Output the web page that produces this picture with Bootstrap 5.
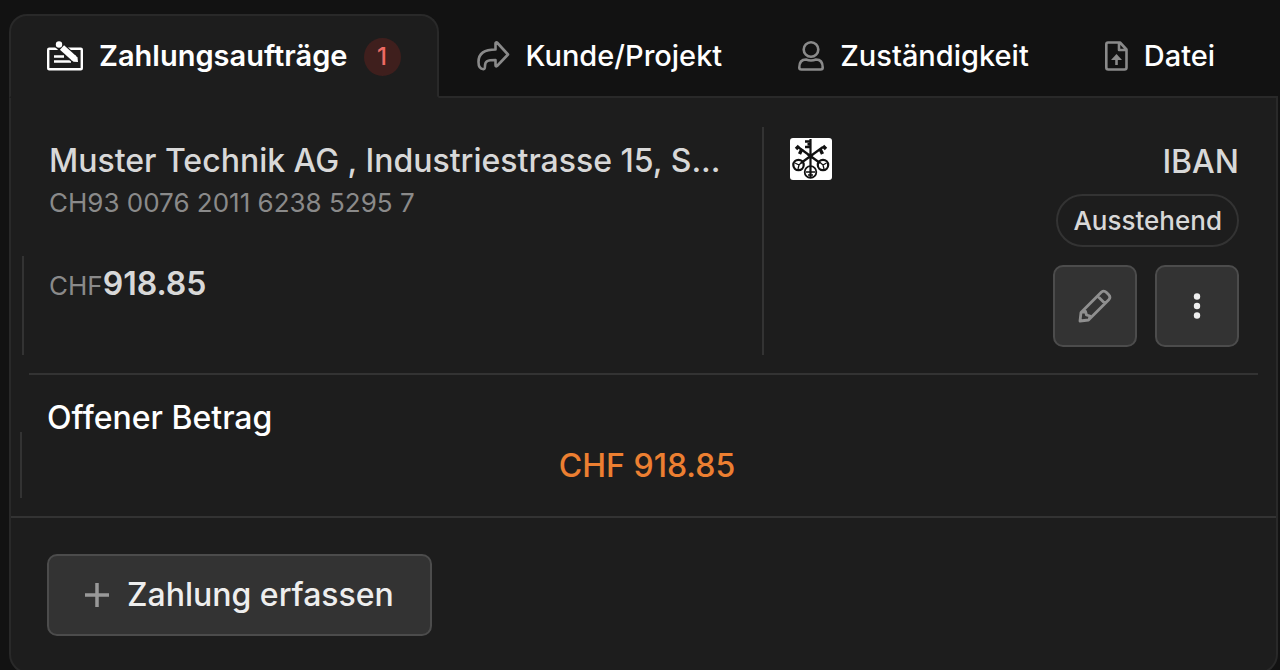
<!DOCTYPE html>
<html lang="de" data-bs-theme="dark">
<head>
<meta charset="utf-8">
<meta name="viewport" content="width=device-width, initial-scale=1">
<title>Zahlungsaufträge</title>
<link href="https://cdn.jsdelivr.net/npm/bootstrap@5.3.0/dist/css/bootstrap.min.css" rel="stylesheet">
<style>
  :root { --surface: #1d1d1d; --edge: #292929; --rule: #333; --muted: #8a8a8a; --soft: #d8d8d8; }
  body { background: #121212; font-family: Inter, "Liberation Sans", sans-serif; font-size: 32px; line-height: 40px; color: #fff; }
  .page-area { height: 100vh; overflow: hidden; padding: 14px 2px 0 9px; }
  .pay-tabs { border: 0; }
  .pay-tabs .nav-item { margin-bottom: -2px; position: relative; }
  .pay-tabs .nav-link { display: flex; align-items: center; gap: 16px; height: 84px; padding: 0 36px; border: 2px solid transparent; border-radius: 18px 18px 0 0; margin: 0; font-size: 29px; font-weight: 500; color: #fff; }
  .pay-tabs .nav-link.active { background: var(--surface); border-color: var(--edge); border-bottom-color: var(--surface); color: #fff; font-weight: 600; }
  .pay-tabs svg { flex: none; }
  .count { width: 37px; height: 38px; margin-top: 2px; border-radius: 50%; background: #3f1f1d; color: #ee6a63; font-size: 24px; font-weight: 500; }
  .panel { background: var(--surface); border: 2px solid var(--edge); border-radius: 0 0 20px 20px; }
  .payment { padding: 29px 0 18px; }
  .payee { border-right: 2px solid var(--rule); width: 753px; }
  .payee-text { padding: 14px 36px 0 38px; height: 129px; }
  .soft { color: var(--soft); }
  .payee-name, .method { font-weight: 500; }
  .small-text { font-size: 26px; line-height: 44px; }
  .muted { color: var(--muted); }
  .amount { margin-left: 11px; padding-left: 25px; border-left: 2px solid var(--rule); height: 99px; padding-top: 8px; }
  .amount strong { font-weight: 600; }
  .details { padding: 11px 37px 0 26px; }
  .pill { border: 2px solid var(--rule); border-radius: 27px; padding: 5px 15px; height: 53px; font-size: 26px; line-height: 40px; font-weight: 500; margin: 12px 0 18px; }
  .tool { --bs-btn-bg: #333; --bs-btn-border-color: #4c4c4c; --bs-btn-color: #eee; --bs-btn-hover-bg: #3c3c3c; --bs-btn-hover-border-color: #5a5a5a; --bs-btn-hover-color: #fff; --bs-btn-border-width: 2px; --bs-btn-border-radius: 10px; height: 82px; padding: 0; }
  .tool-square { width: 84px; }
  .tools { gap: 18px; }
  .divider { margin: 0 18px; border-top: 2px solid var(--rule); opacity: 1; }
  .open-title { font-size: 32px; line-height: 40px; font-weight: 500; margin: 0; padding: 23px 0 0 36px; height: 57px; }
  .open-amount { margin-left: 9px; padding-right: 4px; border-left: 2px solid var(--rule); height: 66px; padding-top: 14px; color: #ec7f31; font-weight: 500; margin-bottom: 18px; }
  .actions { border-top: 2px solid var(--rule); padding: 36px; }
  .add-btn { display: inline-flex; align-items: center; gap: 18px; padding: 0 36px; font-size: 32px; font-weight: 500; }
</style>
</head>
<body>
<main class="page-area">
  <ul class="nav nav-tabs pay-tabs flex-nowrap">
    <li class="nav-item"><a class="nav-link active" aria-current="page" href="#auftraege">
      <svg width="36" height="32" viewBox="0 0 36 32"><rect x="1.200" y="8.700" width="33.600" height="20.600" rx="1" fill="none" stroke="#fff" stroke-width="2.400"/><path d="M7 16.500h10M7 21.500h17" stroke="#fff" stroke-width="2.400"/><path d="M11 4 28.500 19.800" stroke="#1d1d1d" stroke-width="8.500"/><path d="M15 7.500 27 18.300" stroke="#fff" stroke-width="6.200"/><path d="m28.300 15.200 2.200 2.300.5 4.500-4.500-.2-2.400-2z" fill="#fff"/><circle cx="12" cy="4.500" r="3.200" fill="#fff"/></svg>
      <span>Zahlungsaufträge</span><span class="count d-flex align-items-center justify-content-center">1</span></a></li>
    <li class="nav-item"><a class="nav-link" href="#kunde">
      <svg width="33" height="32" viewBox="0 0 33 32" fill="none" stroke="#8a8a8a" stroke-width="2.600" stroke-linejoin="round"><path d="M18.500 3.500q0-1.500 1.500-1L31 14.500 20 26q-1.500 1-1.500-1v-5c-8 0-10.500 1-10.500 6q0 3-1.500 3.200C3 29 1.500 26 1.500 22c0-9 6-12.500 17-12.500z"/></svg>
      <span>Kunde/Projekt</span></a></li>
    <li class="nav-item"><a class="nav-link" href="#zustaendigkeit">
      <svg width="26" height="32" viewBox="0 0 26 32" fill="none" stroke="#8a8a8a" stroke-width="2.600"><circle cx="13" cy="9.500" r="7.300"/><path d="M8 19.500q5 2 10 0c5 0 6.700 4 6.700 8q0 2-2 2H3.300q-2 0-2-2c0-4 1.700-8 6.700-8z" stroke-linejoin="round"/></svg>
      <span>Zuständigkeit</span></a></li>
    <li class="nav-item"><a class="nav-link" href="#datei">
      <svg width="23" height="32" viewBox="0 0 23 32" fill="none" stroke="#8a8a8a" stroke-width="2.600"><path d="M3 2.500h12l6.500 7v18q0 2-2 2H3.300q-2 0-2-2v-23q0-2 1.700-2zM14 3v7h7" stroke-linejoin="round"/><path d="M11.500 25v-7"/><path d="m11.500 14 5.500 6H6z" fill="#8a8a8a" stroke="none"/></svg>
      <span>Datei</span></a></li>
  </ul>

  <section class="panel" id="auftraege">
    <div class="payment d-flex">
      <div class="payee flex-shrink-0">
        <div class="payee-text">
          <div class="soft payee-name text-truncate">Muster Technik AG , Industriestrasse 15, S...</div>
          <div class="small-text muted">CH93 0076 2011 6238 5295 7</div>
        </div>
        <div class="amount soft"><span class="small-text muted">CHF</span><strong>918.85</strong></div>
      </div>
      <div class="details d-flex justify-content-between align-items-start flex-grow-1">
        <svg width="42" height="42" viewBox="0 0 42 42" role="img" aria-label="Bank"><rect width="42" height="42" rx="3" fill="#fff"/><g fill="none" stroke="#111"><path d="M20.500 1v39M8 9l22 16M33 9 11 25" stroke-width="2.200"/><circle cx="8.500" cy="27" r="5.200" stroke-width="2.200"/><circle cx="33" cy="27" r="5.200" stroke-width="2.200"/><circle cx="20.500" cy="34" r="5.800" stroke-width="1.800"/><path d="m5 25 4 2 3-3M9 27l-1 4M29.500 24l3.500 3 3.500-2M33 27l1 4M16 34h9M18 37h5" stroke-width="1.300"/><path d="M20 3.500h-5M20 9h-5M17.500 6.200h3" stroke-width="2.400"/><path d="m12 11-2.500 5M9 8l-3 3M30 11l2.500 5M33 8l3 3" stroke-width="3.400"/></g><path d="m17 17 7-1-3 5z" fill="#111"/></svg>
        <div class="d-flex flex-column align-items-end">
          <span class="soft method pt-1">IBAN</span>
          <span class="pill soft">Ausstehend</span>
          <div class="tools d-flex">
            <button type="button" class="btn tool tool-square d-flex align-items-center justify-content-center" aria-label="Bearbeiten"><svg width="34" height="34" viewBox="0 0 34 34" fill="none" stroke="#8f8f8f" stroke-width="2.800" stroke-linejoin="round"><path d="m2 32 1-8.500L23.500 3q2.500-2 5 .5l2 2q2.500 2.500.5 5L10.500 31zM19.500 7l7.500 7.500M3.500 23.500l4-1 1 3.500 3.500 1-1 4"/></svg></button>
            <button type="button" class="btn tool tool-square d-flex align-items-center justify-content-center" aria-label="Mehr"><svg width="8" height="26" viewBox="0 0 8 26" fill="#eee"><circle cx="4" cy="3.500" r="3.200"/><circle cx="4" cy="13" r="3.200"/><circle cx="4" cy="22.500" r="3.200"/></svg></button>
          </div>
        </div>
      </div>
    </div>
    <hr class="divider">
    <h2 class="open-title">Offener Betrag</h2>
    <div class="open-amount text-center">CHF 918.85</div>
    <div class="actions">
      <button type="button" class="btn tool add-btn"><svg width="24" height="24" viewBox="0 0 24 24" stroke="#999" stroke-width="3.500"><path d="M12 0v24M0 12h24"/></svg><span>Zahlung erfassen</span></button>
    </div>
  </section>
</main>
<script src="https://cdn.jsdelivr.net/npm/bootstrap@5.3.0/dist/js/bootstrap.bundle.min.js"></script>
</body>
</html>
